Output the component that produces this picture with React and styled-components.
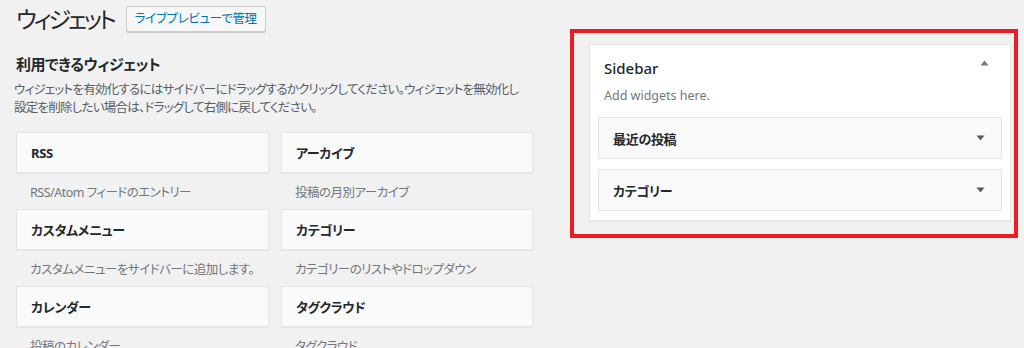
import React from "react";
import styled, { createGlobalStyle } from "styled-components";

const Global = createGlobalStyle`
  html, body { margin: 0; padding: 0; }
  body {
    background: #f1f1f1;
    font-family: "Noto Sans", "Noto Sans CJK JP", sans-serif;
    color: #23282d;
    overflow: hidden;
    font-feature-settings: "palt";
  }
`;

const Page = styled.div`
  display: flex;
  align-items: flex-start;
  padding-left: 16px;
  height: 348px;
  overflow: hidden;
`;

const LeftCol = styled.div`
  width: 517px;
  flex: none;
  display: flex;
  flex-direction: column;
`;

const Header = styled.div`
  display: flex;
  align-items: center;
  padding-top: 6px;
  height: 26px;
`;

const Title = styled.h1`
  margin: 0;
  font-size: 23px;
  font-weight: 400;
  line-height: 26px;
  letter-spacing: -3px;
  color: #23282d;
`;

const HeaderButton = styled.button`
  margin-left: 12px;
  height: 26px;
  box-sizing: border-box;
  padding: 0 8px;
  border: 1px solid #ccc;
  border-radius: 2px;
  background: #f7f7f7;
  color: #0073aa;
  font-family: inherit;
  font-feature-settings: "palt";
  font-size: 12.5px;
  letter-spacing: -0.3px;
  line-height: 24px;
  white-space: nowrap;
  box-shadow: 0 1px 0 #ccc;
`;

const SectionHeading = styled.h2`
  margin: 22px 0 0;
  font-size: 15px;
  line-height: 20px;
  font-weight: 600;
  letter-spacing: -0.5px;
  color: #23282d;
`;

const Intro = styled.p`
  margin: 7px 0 0 -2px;
  font-size: 12.5px;
  line-height: 18px;
  letter-spacing: -0.75px;
  white-space: nowrap;
  color: #555d66;
`;

const Grid = styled.div`
  margin-top: 15px;
  display: grid;
  grid-template-columns: 253px 252px;
  column-gap: 12px;
`;

const WidgetCell = styled.div`
  display: flex;
  flex-direction: column;
`;

const WidgetCard = styled.div`
  height: 41px;
  box-sizing: border-box;
  border: 1px solid #e5e5e5;
  background: #fafafa;
  box-shadow: 0 1px 1px rgba(0, 0, 0, 0.04);
  padding: 0 14px;
  display: flex;
  align-items: center;
  font-size: 13px;
  font-weight: 700;
  letter-spacing: -0.3px;
  color: #23282d;
`;

const WidgetDesc = styled.div`
  height: 36px;
  padding: 0 14px;
  display: flex;
  align-items: center;
  white-space: nowrap;
  font-size: 12.5px;
  letter-spacing: -0.5px;
  color: #72777c;
`;

const RightCol = styled.div`
  margin-left: 37px;
  margin-top: 29px;
  width: 448px;
  flex: none;
`;

const Highlight = styled.div`
  box-sizing: border-box;
  width: 448px;
  border: 4px solid #ed1c24;
  padding: 11px 3px 13px 15px;
`;

const SidebarPanel = styled.div`
  box-sizing: border-box;
  width: 422px;
  height: 177px;
  background: #fff;
  border: 1px solid #e5e5e5;
  box-shadow: 0 1px 1px rgba(0, 0, 0, 0.04);
  padding: 13px 0 9px;
  display: flex;
  flex-direction: column;
`;

const PanelTitleRow = styled.div`
  display: flex;
  justify-content: space-between;
  align-items: center;
  padding: 0 21px 0 14px;
  height: 20px;
`;

const PanelTitle = styled.div`
  font-size: 15px;
  font-weight: 500;
  line-height: 20px;
  color: #23282d;
`;

const PanelDesc = styled.div`
  margin-top: 9px;
  padding: 0 14px;
  font-size: 12.5px;
  line-height: 18px;
  color: #72777c;
`;

const PanelList = styled.div`
  margin-top: 12px;
  padding: 0 8px;
  display: flex;
  flex-direction: column;
  gap: 10px;
`;

const PanelItem = styled.div`
  height: 42px;
  box-sizing: border-box;
  border: 1px solid #e5e5e5;
  background: #f9f9f9;
  display: flex;
  align-items: center;
  justify-content: space-between;
  padding: 0 16px 0 14px;
  font-size: 13px;
  font-weight: 700;
  letter-spacing: -0.3px;
  color: #23282d;
`;

const Arrow = styled.svg`
  display: block;
  width: 9px;
  height: 6px;
  margin-top: ${(p) => (p.$up ? "-10px" : "0")};
`;

const ToggleArrow = ({ up }) => (
  <Arrow $up={up} viewBox="0 0 9 6">
    {up ? (
      <path d="M4.5 0.5 L8.5 5.5 L0.5 5.5 Z" fill="#72777c" />
    ) : (
      <path d="M0.5 0.5 L8.5 0.5 L4.5 5.5 Z" fill="#555d66" />
    )}
  </Arrow>
);

const widgets = [
  ["RSS", "RSS/Atom フィードのエントリー"],
  ["アーカイブ", "投稿の月別アーカイブ"],
  ["カスタムメニュー", "カスタムメニューをサイドバーに追加します。"],
  ["カテゴリー", "カテゴリーのリストやドロップダウン"],
  ["カレンダー", "投稿のカレンダー"],
  ["タグクラウド", "タグクラウド"],
];

export default function App() {
  return (
    <>
      <Global />
      <Page>
        <LeftCol>
          <Header>
            <Title>ウィジェット</Title>
            <HeaderButton>ライブプレビューで管理</HeaderButton>
          </Header>
          <SectionHeading>利用できるウィジェット</SectionHeading>
          <Intro>
            ウィジェットを有効化するにはサイドバーにドラッグするかクリックしてください。ウィジェットを無効化し
            <br />
            設定を削除したい場合は、ドラッグして右側に戻してください。
          </Intro>
          <Grid>
            {widgets.map(([name, desc]) => (
              <WidgetCell key={name}>
                <WidgetCard>{name}</WidgetCard>
                <WidgetDesc>{desc}</WidgetDesc>
              </WidgetCell>
            ))}
          </Grid>
        </LeftCol>
        <RightCol>
          <Highlight>
            <SidebarPanel>
              <PanelTitleRow>
                <PanelTitle>Sidebar</PanelTitle>
                <ToggleArrow up />
              </PanelTitleRow>
              <PanelDesc>Add widgets here.</PanelDesc>
              <PanelList>
                <PanelItem>
                  最近の投稿
                  <ToggleArrow />
                </PanelItem>
                <PanelItem>
                  カテゴリー
                  <ToggleArrow />
                </PanelItem>
              </PanelList>
            </SidebarPanel>
          </Highlight>
        </RightCol>
      </Page>
    </>
  );
}
